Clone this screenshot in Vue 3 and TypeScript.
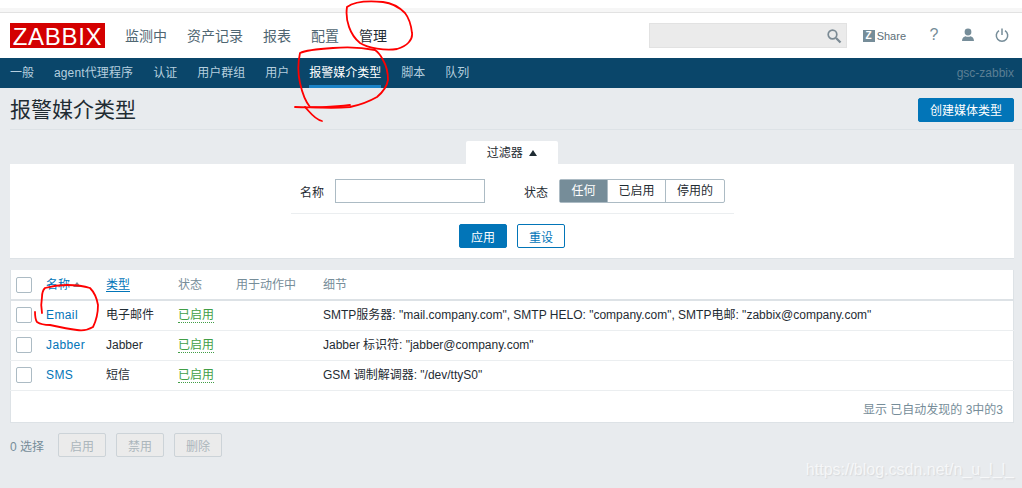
<template>
  <div class="page">
    <div class="strip"></div>
    <header class="top">
      <div class="logo">ZABBIX</div>
      <nav class="main-nav">
        <a v-for="m in mainMenu" :key="m" :class="{ on: m === '管理' }">{{ m }}</a>
      </nav>
      <div class="tools">
        <div class="search">
          <svg width="16" height="16" viewBox="0 0 16 16" fill="none" stroke="#7b8a94">
            <circle cx="6.5" cy="6.5" r="4.3" stroke-width="1.7" />
            <path d="M10 10l4.5 4.5" stroke-width="2.3" />
          </svg>
        </div>
        <div class="share"><span class="zbox">Z</span>Share</div>
        <span class="help">?</span>
        <svg class="user" width="14" height="14" viewBox="0 0 14 14" fill="#768d99">
          <circle cx="7" cy="4" r="3.4" />
          <path d="M1 13c0-3 2-4.600 3.600-4.800C5.600 9 8.400 9 9.400 8.200 11 8.400 13 10 13 13z" />
        </svg>
        <svg class="power" width="14" height="14" viewBox="0 0 14 14" fill="none" stroke="#768d99" stroke-width="1.5">
          <path d="M4 2.700a5.700 5.700 0 1 0 6 0" />
          <path d="M7 0.500v6.500" />
        </svg>
      </div>
    </header>

    <nav class="sub-nav">
      <a v-for="s in subMenu" :key="s" :class="{ on: s === '报警媒介类型' }">{{ s }}</a>
      <span class="server">gsc-zabbix</span>
    </nav>

    <div class="head">
      <h1>报警媒介类型</h1>
      <button class="btn primary create">创建媒体类型</button>
    </div>

    <div class="filter-tab-wrap">
      <div class="filter-tab">过滤器 <i class="up"></i></div>
    </div>
    <section class="filter">
      <div class="filter-row">
        <label>名称</label>
        <input class="name-input" type="text" />
        <label class="state-label">状态</label>
        <div class="seg">
          <span class="on">任何</span>
          <span>已启用</span>
          <span>停用的</span>
        </div>
      </div>
      <div class="filter-actions">
        <button class="btn primary">应用</button>
        <button class="btn outline">重设</button>
      </div>
    </section>

    <section class="list">
      <table>
        <colgroup>
          <col class="c0" /><col class="c1" /><col class="c2" /><col class="c3" /><col class="c4" /><col />
        </colgroup>
        <thead>
          <tr>
            <th><span class="check"></span></th>
            <th><a class="sorted">名称<i class="sort"></i></a></th>
            <th><a>类型</a></th>
            <th>状态</th>
            <th>用于动作中</th>
            <th>细节</th>
          </tr>
        </thead>
        <tbody>
          <tr v-for="r in rows" :key="r.name">
            <td><span class="check"></span></td>
            <td><a>{{ r.name }}</a></td>
            <td>{{ r.type }}</td>
            <td><span class="enabled">已启用</span></td>
            <td></td>
            <td>{{ r.detail }}</td>
          </tr>
        </tbody>
      </table>
      <div class="paging">显示 已自动发现的 3中的3</div>
    </section>

    <div class="actions">
      <span class="count">0 选择</span>
      <button class="btn off">启用</button>
      <button class="btn off">禁用</button>
      <button class="btn off">删除</button>
    </div>

    <div class="mark">https://blog.csdn.net/n_u_l_l_</div>

    <svg class="ink" width="1022" height="488" viewBox="0 0 1022 488" fill="none" stroke="#f00" stroke-width="1.8" stroke-linecap="round" stroke-linejoin="round">
      <path d="M347 7C345 20 350 35 360 43 368 48 385 51 397 49 407 46 413 40 412 33 411 24 409 18 405 13 398 6 392 3 383 2 372 1 355 1 347 7" />
      <path d="M375 50C360 47 345 47 333 48 318 49 306 50 300 53 298 62 298 74 300 83 302 92 305 101 310 107 325 108 338 108 350 107 360 105 370 101 377 97 383 92 387 86 388 80 388 72 386 65 383 60 381 56 378 52 375 50" />
      <path d="M295 107C310 108 335 107 350 105" />
      <path d="M305 107C310 112 314 119 322 121" />
      <path d="M42 313C41 307 41 302 42 297 42 293 43 290 45 288 52 286 60 285 67 285 75 285 84 286 90 288 95 293 97 299 98 305 98 313 96 321 93 327 88 330 83 331 77 330 68 329 59 327 50 325 45 325 40 324 37 322 35 319 35 315 35 312" />
    </svg>
  </div>
</template>

<script setup lang="ts">
interface MediaRow {
  name: string
  type: string
  detail: string
}

const mainMenu: string[] = ['监测中', '资产记录', '报表', '配置', '管理']
const subMenu: string[] = ['一般', 'agent代理程序', '认证', '用户群组', '用户', '报警媒介类型', '脚本', '队列']

const rows: MediaRow[] = [
  {
    name: 'Email',
    type: '电子邮件',
    detail: 'SMTP服务器: "mail.company.com", SMTP HELO: "company.com", SMTP电邮: "zabbix@company.com"'
  },
  { name: 'Jabber', type: 'Jabber', detail: 'Jabber 标识符: "jabber@company.com"' },
  { name: 'SMS', type: '短信', detail: 'GSM 调制解调器: "/dev/ttyS0"' }
]
</script>

<style>
html,
body {
  margin: 0;
  background: #e8ebee;
}
</style>

<style scoped>
.page {
  position: relative;
  width: 1022px;
  height: 488px;
  overflow: hidden;
  background: #e8ebee;
  color: #1f2c33;
  font: 12px "Liberation Sans", "Noto Sans CJK SC", sans-serif;
}

.strip {
  height: 13px;
  box-sizing: border-box;
  background: linear-gradient(#fff 8px, #f6f6f6 8px);
  border-bottom: 1px solid #e2e2e2;
}

.top {
  display: flex;
  align-items: flex-start;
  height: 45px;
  padding: 10px 13px 0 10px;
  box-sizing: border-box;
  background: #fff;
}

.logo {
  width: 95px;
  height: 25px;
  background: #d40000;
  color: #fff;
  font-size: 24px;
  line-height: 27px;
  letter-spacing: 0.7px;
  text-align: center;
}

.main-nav {
  display: flex;
  gap: 20px;
  margin-left: 20px;
  font-size: 14px;
  line-height: 27px;
  color: #4f6672;
}

.main-nav a {
  position: relative;
}

.main-nav a.on {
  color: #1f2c33;
}

.main-nav a.on::after {
  content: "";
  position: absolute;
  left: 8px;
  top: 35px;
  border: 6px solid transparent;
  border-top: 0;
  border-bottom-color: #0a466a;
}

.tools {
  display: flex;
  align-items: flex-start;
  margin-left: auto;
}

.search {
  display: flex;
  align-items: center;
  justify-content: flex-end;
  width: 198px;
  height: 25px;
  padding-right: 4px;
  box-sizing: border-box;
  background: #ebebeb;
  border: 1px solid #e2e2e2;
}

.share {
  display: flex;
  align-items: center;
  height: 25px;
  margin-left: 16px;
  font-size: 11px;
  color: #5d6f79;
}

.zbox {
  width: 12px;
  height: 12px;
  margin-right: 2px;
  background: #768d99;
  color: #fff;
  font-size: 10px;
  font-weight: bold;
  line-height: 12px;
  text-align: center;
}

.help {
  width: 10px;
  margin-left: 23px;
  font-size: 16px;
  line-height: 24px;
  color: #768d99;
  text-align: center;
}

.user {
  margin: 5px 0 0 22px;
}

.power {
  margin: 5px 0 0 20px;
}

.sub-nav {
  display: flex;
  gap: 20px;
  height: 30px;
  padding: 0 8px 0 10px;
  box-sizing: border-box;
  background: #0a466a;
  color: #b5cfdf;
  line-height: 30px;
}

.sub-nav a:nth-child(2) {
  letter-spacing: 0.12px;
}

.sub-nav a.on {
  color: #fff;
  box-shadow: inset 0 -3px 0 #1b83c7;
}

.server {
  margin-left: auto;
  color: #5b7f94;
}

.head {
  display: flex;
  align-items: center;
  justify-content: space-between;
  height: 39px;
  margin-left: 10px;
  padding: 2px 8px 0 0;
  border-bottom: 1px solid #dde2e6;
}

h1 {
  margin: 1px 0 0;
  font-size: 21px;
  font-weight: normal;
  line-height: 28px;
  color: #1f2c33;
}

.btn {
  height: 24px;
  width: 48px;
  padding: 0;
  box-sizing: border-box;
  border: 1px solid #0275b8;
  border-radius: 2px;
  font: inherit;
}

.btn.primary {
  background: #0275b8;
  color: #fff;
}

.btn.outline {
  background: #fff;
  color: #0275b8;
}

.btn.create {
  width: 96px;
}

.filter-tab-wrap {
  display: flex;
  justify-content: center;
  margin: 11px 0 0;
  padding-left: 2px;
}

.filter-tab {
  width: 92px;
  height: 23px;
  background: #fff;
  line-height: 24px;
  text-align: center;
  border-radius: 2px 2px 0 0;
}

.up {
  display: inline-block;
  margin-left: 3px;
  vertical-align: 1px;
  border: 4.5px solid transparent;
  border-top: 0;
  border-bottom: 6px solid #1f2c33;
}

.filter {
  height: 95px;
  margin: 0 8px 0 10px;
  box-sizing: border-box;
  padding-top: 15px;
  background: #fff;
  border-bottom: 1px solid #dde2e6;
}

.filter-row {
  display: flex;
  align-items: center;
  width: 443px;
  height: 35px;
  margin-left: 281px;
  padding: 0 0 10px 9px;
  box-sizing: border-box;
  border-bottom: 1px solid #ebeef0;
}

.name-input {
  width: 150px;
  height: 24px;
  margin-left: 11px;
  padding: 0;
  box-sizing: border-box;
  border: 1px solid #acbbc4;
  background: #fff;
}

.state-label {
  margin-left: 39px;
}

.seg {
  display: flex;
  height: 24px;
  margin-left: 11px;
  border: 1px solid #acbbc4;
  border-radius: 2px;
  box-sizing: border-box;
  line-height: 22px;
  text-align: center;
}

.seg span {
  width: 58px;
  border-left: 1px solid #acbbc4;
  box-sizing: border-box;
}

.seg span:first-child {
  width: 47px;
  border-left: 0;
}

.seg span:last-child {
  width: 59px;
}

.seg .on {
  background: #768d99;
  color: #fff;
}

.filter-actions {
  display: flex;
  justify-content: center;
  gap: 10px;
  margin-top: 10px;
}

.list {
  height: 153px;
  margin: 11px 8px 0 10px;
  box-sizing: border-box;
  background: #fff;
  border-bottom: 1px solid #dde2e6;
  box-shadow: inset 1px 0 #dde2e6, inset -1px 0 #dde2e6;
}

table {
  width: 100%;
  border-collapse: collapse;
  table-layout: fixed;
}

.c0 { width: 36px; }
.c1 { width: 60px; }
.c2 { width: 72px; }
.c3 { width: 58px; }
.c4 { width: 87px; }

th {
  height: 29px;
  padding: 0;
  border-bottom: 2px solid #dde2e6;
  color: #768d99;
  font-weight: normal;
  line-height: 14px;
  text-align: left;
}

th a {
  display: inline-block;
  color: #0275b8;
  line-height: 12px;
  border-bottom: 1px solid #0275b8;
}

th a.sorted {
  border-bottom: 0;
}

td {
  height: 30px;
  padding: 0;
  box-sizing: border-box;
  border-bottom: 1px solid #ebeef0;
  line-height: 14px;
}

td a {
  color: #0275b8;
  letter-spacing: 0.4px;
}

.check {
  display: block;
  width: 16px;
  height: 16px;
  margin-left: 6px;
  box-sizing: border-box;
  border: 1px solid #acbbc4;
  border-radius: 2px;
}

.sort {
  display: inline-block;
  margin-left: 3px;
  vertical-align: 2px;
  border: 4px solid transparent;
  border-top: 0;
  border-bottom: 5px solid #768d99;
}

.enabled {
  display: inline-block;
  color: #429e47;
  border-bottom: 1px dotted #429e47;
}

.paging {
  padding: 9px 11px 0 0;
  color: #768d99;
  text-align: right;
}

.actions {
  display: flex;
  align-items: center;
  gap: 10px;
  margin: 10px 0 0 10px;
}

.count {
  width: 38px;
  color: #768d99;
}

.btn.off {
  background: #ebebeb;
  border-color: #ccd3d8;
  color: #acb6bc;
}

.mark {
  position: absolute;
  right: 8px;
  top: 459px;
  font-size: 16px;
  line-height: 22px;
  color: rgba(255, 255, 255, 0.7);
  text-shadow: 1px 1px 1px rgba(120, 120, 120, 0.15);
  white-space: nowrap;
}

.ink {
  position: absolute;
  left: 0;
  top: 0;
  pointer-events: none;
}
</style>
